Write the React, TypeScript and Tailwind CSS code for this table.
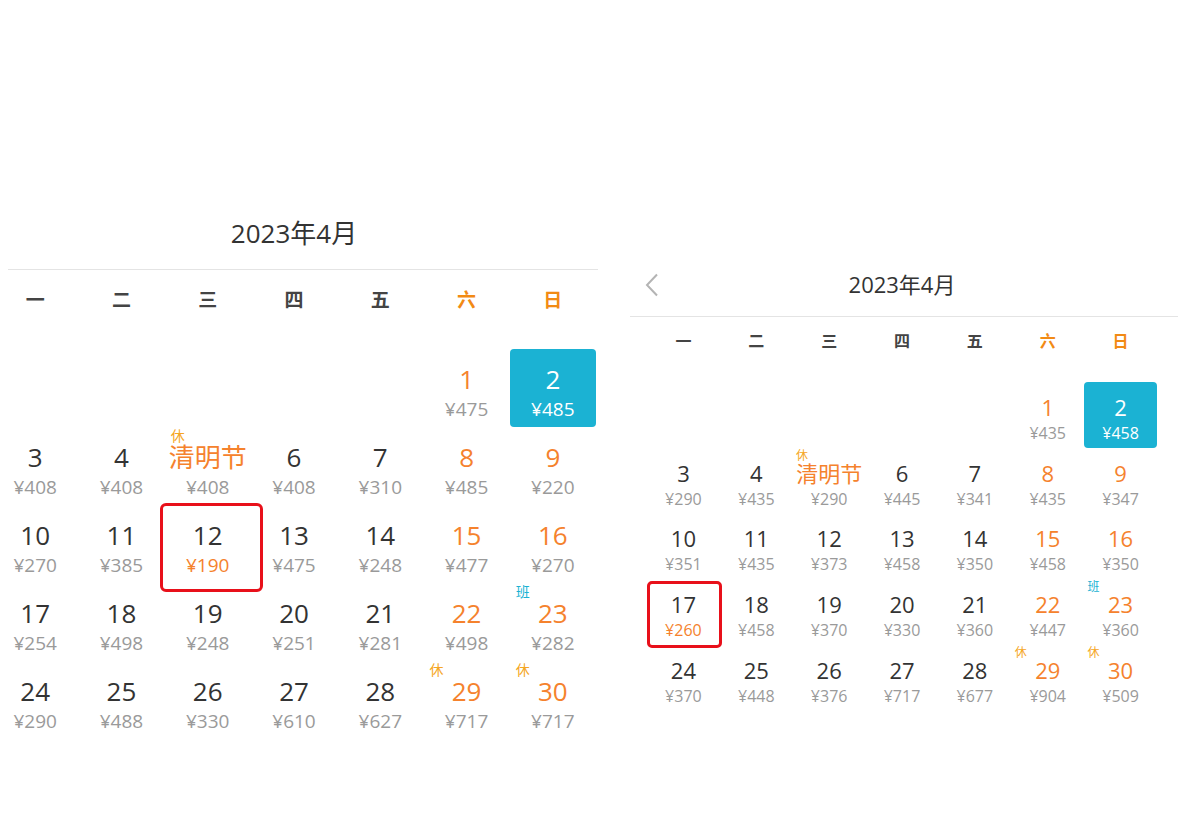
type Day = {
  d: number;
  p: number;
  label?: string;
  badge?: string;
};

const WEEK = ["一", "二", "三", "四", "五", "六", "日"];
const WEEKEND = [1, 2, 8, 9, 15, 16, 22, 23, 29, 30];

function buildDays(prices: number[]): Day[] {
  return prices.map((p, i) => {
    const d = i + 1;
    const day: Day = { d, p };
    if (d === 5) {
      day.label = "清明节";
      day.badge = "休";
    }
    if (d === 23) day.badge = "班";
    if (d === 29 || d === 30) day.badge = "休";
    return day;
  });
}

const sizes = {
  lg: {
    wrap: "ml-[-8px] mt-[213px] w-[604px]",
    title: "h-[40px] text-[26px] leading-[40px]",
    divider: "ml-[16px] mt-[16px] w-[590px]",
    week: "h-[60px] text-[19px] leading-[60px]",
    grid: "mt-[19px]",
    cell: "h-[78px] pt-[17px]",
    num: "text-[26px] leading-[26px]",
    price: "mt-[5px] text-[19px] leading-[24px]",
    badge: "left-[calc(50%-30px)] top-[9px] text-[14px] leading-[12px]",
    mark: "left-[-5px] top-[-2px] h-[89px] w-[103px] rounded-[6px]",
  },
  sm: {
    wrap: "ml-[51px] mt-[266px] w-[510px]",
    title: "h-[36px] text-[22px] leading-[36px]",
    divider: "ml-[-17px] mt-[14px] w-[548px]",
    week: "h-[48px] text-[16px] leading-[48px]",
    grid: "mt-[17px]",
    cell: "h-[65.7px] pt-[14px]",
    num: "text-[22px] leading-[22px]",
    price: "mt-[5px] text-[16px] leading-[20px]",
    badge: "left-[calc(50%-27px)] top-[8px] text-[12px] leading-[10px]",
    mark: "left-[0px] top-[2px] h-[67px] w-[75px] rounded-[5px]",
  },
};

function Calendar({
  size,
  prices,
  marked,
  back,
}: {
  size: "lg" | "sm";
  prices: number[];
  marked: number;
  back?: boolean;
}) {
  const s = sizes[size];
  const days = buildDays(prices);
  return (
    <div className={`relative shrink-0 ${s.wrap}`}>
      {back && (
        <svg
          className="absolute left-[-3px] top-[7px]"
          width="16"
          height="24"
          viewBox="0 0 16 24"
          fill="none"
        >
          <polyline points="13,1.5 3,12 13,22.5" stroke="#b4b4b4" strokeWidth="2" />
        </svg>
      )}
      <div className={`text-center text-[#333] ${s.title}`}>2023年4月</div>
      <div className={`h-px bg-[#e4e4e4] ${s.divider}`} />
      <div className="grid grid-cols-7">
        {WEEK.map((w, i) => (
          <div
            key={w}
            className={`text-center font-bold ${s.week} ${i >= 5 ? "text-[#f28a14]" : "text-[#444]"}`}
          >
            {w}
          </div>
        ))}
      </div>
      <div className={`grid grid-cols-7 ${s.grid}`}>
        {[0, 1, 2, 3, 4].map((b) => (
          <div key={"b" + b} className={s.cell} />
        ))}
        {days.map((day) => {
          const selected = day.d === 2;
          const weekend = WEEKEND.includes(day.d);
          const numColor = selected
            ? "text-white"
            : day.label || weekend
              ? "text-[#f5822d]"
              : "text-[#333]";
          const priceColor = selected
            ? "text-white"
            : day.d === marked
              ? "text-[#f5822d]"
              : "text-[#9a9a9a]";
          return (
            <div
              key={day.d}
              className={`relative flex flex-col items-center ${s.cell} ${selected ? "rounded-[4px] bg-[#1bb2d3]" : ""}`}
            >
              {day.badge && (
                <div
                  className={`absolute -translate-x-1/2 -translate-y-1/2 ${s.badge} ${day.badge === "班" ? "text-[#1bb2d3]" : "text-[#f5a623]"}`}
                >
                  {day.badge}
                </div>
              )}
              <div className={`${s.num} ${numColor}`}>{day.label ?? day.d}</div>
              <div className={`${s.price} ${priceColor}`}>¥{day.p}</div>
              {day.d === marked && (
                <div className={`absolute border-[3px] border-[#e8101a] ${s.mark}`} />
              )}
            </div>
          );
        })}
      </div>
    </div>
  );
}

export default function App() {
  const left = [
    475, 485, 408, 408, 408, 408, 310, 485, 220, 270, 385, 190, 475, 248, 477,
    270, 254, 498, 248, 251, 281, 498, 282, 290, 488, 330, 610, 627, 717, 717,
  ];
  const right = [
    435, 458, 290, 435, 290, 445, 341, 435, 347, 351, 435, 373, 458, 350, 458,
    350, 260, 458, 370, 330, 360, 447, 360, 370, 448, 376, 717, 677, 904, 509,
  ];
  return (
    <div className="flex h-[818px] w-[1200px] items-start overflow-hidden bg-white font-['Open_Sans','Noto_Sans_CJK_SC',sans-serif]">
      <Calendar size="lg" prices={left} marked={12} />
      <Calendar size="sm" prices={right} marked={17} back />
    </div>
  );
}
